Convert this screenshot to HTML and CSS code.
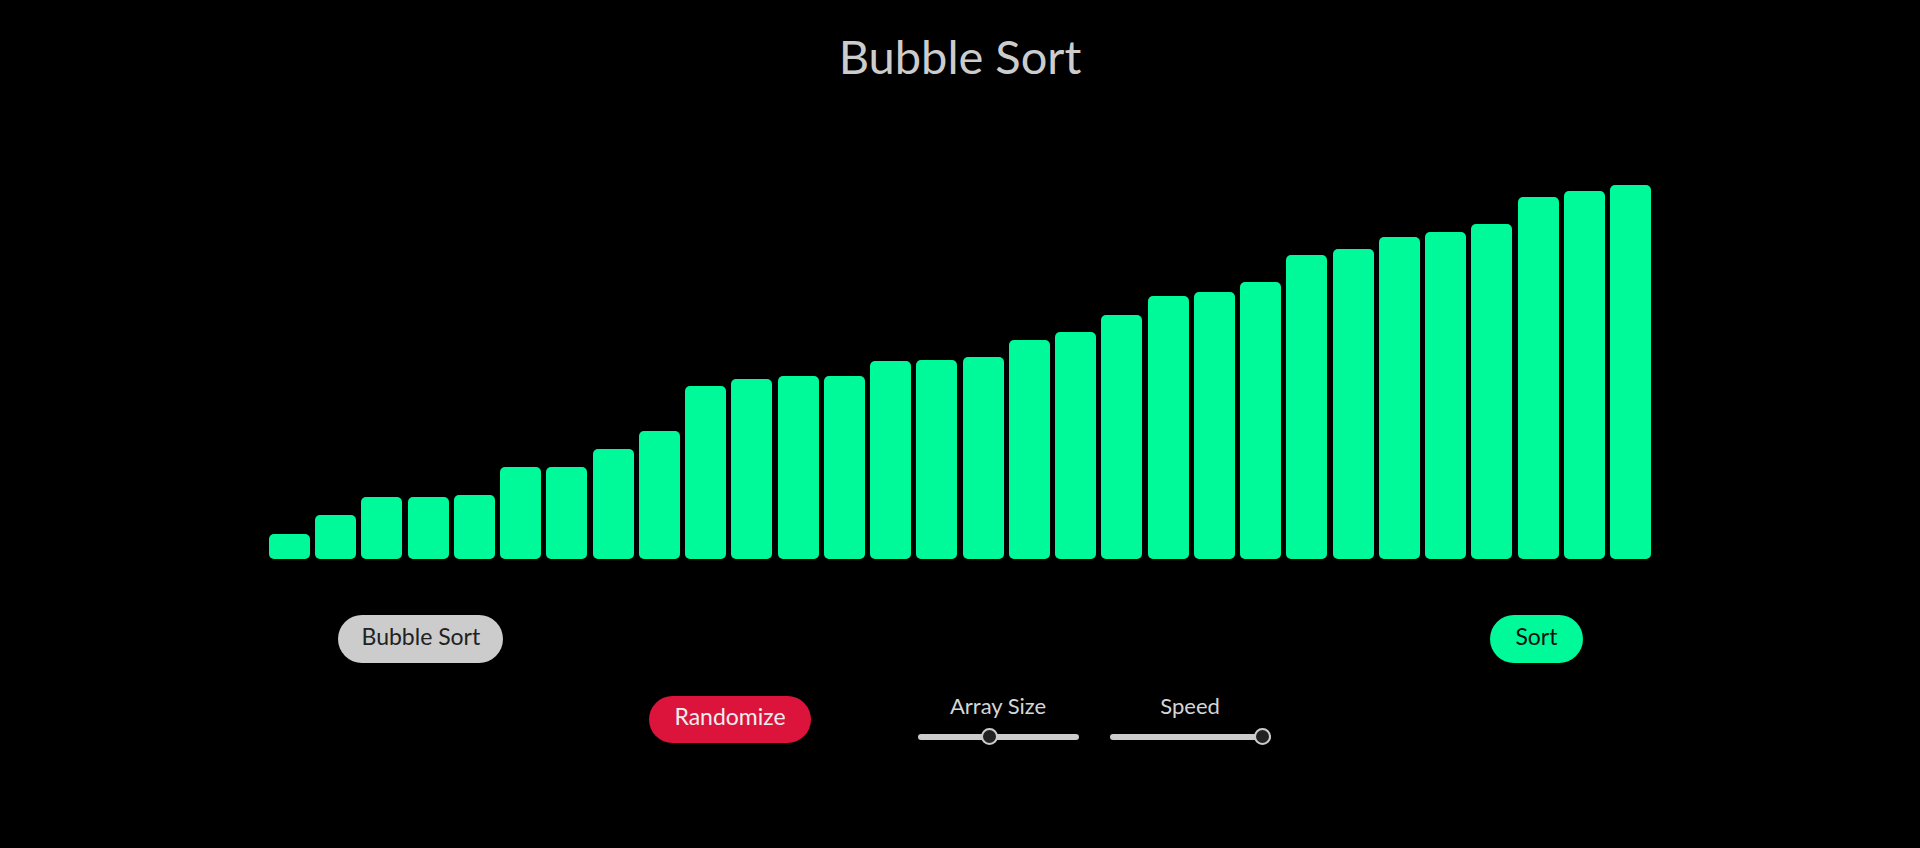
FILE: index.html
```html
<!DOCTYPE html>
<html lang="en">
<head>
<meta charset="utf-8">
<title>Bubble Sort</title>
<link rel="stylesheet" href="styles.css">
</head>
<body>
<main class="app">
  <h1 class="title">Bubble Sort</h1>
  <div class="bars">
    <div class="bar" style="height:25px"></div>
    <div class="bar" style="height:44px"></div>
    <div class="bar" style="height:62px"></div>
    <div class="bar" style="height:62px"></div>
    <div class="bar" style="height:64px"></div>
    <div class="bar" style="height:92px"></div>
    <div class="bar" style="height:92px"></div>
    <div class="bar" style="height:110px"></div>
    <div class="bar" style="height:128px"></div>
    <div class="bar" style="height:173px"></div>
    <div class="bar" style="height:180px"></div>
    <div class="bar" style="height:183px"></div>
    <div class="bar" style="height:183px"></div>
    <div class="bar" style="height:198px"></div>
    <div class="bar" style="height:199px"></div>
    <div class="bar" style="height:202px"></div>
    <div class="bar" style="height:219px"></div>
    <div class="bar" style="height:227px"></div>
    <div class="bar" style="height:244px"></div>
    <div class="bar" style="height:263px"></div>
    <div class="bar" style="height:267px"></div>
    <div class="bar" style="height:277px"></div>
    <div class="bar" style="height:304px"></div>
    <div class="bar" style="height:310px"></div>
    <div class="bar" style="height:322px"></div>
    <div class="bar" style="height:327px"></div>
    <div class="bar" style="height:335px"></div>
    <div class="bar" style="height:362px"></div>
    <div class="bar" style="height:368px"></div>
    <div class="bar" style="height:374px"></div>
  </div>
  <div class="actions">
    <button class="btn btn-algo" type="button">Bubble Sort</button>
    <button class="btn btn-sort" type="button">Sort</button>
  </div>
  <div class="controls">
    <button class="btn btn-random" type="button">Randomize</button>
    <div class="sliders">
      <label class="slider">
        <span class="slider-label">Array Size</span>
        <input class="range" type="range" min="0" max="100" value="44">
      </label>
      <label class="slider">
        <span class="slider-label">Speed</span>
        <input class="range" type="range" min="0" max="100" value="100">
      </label>
    </div>
  </div>
</main>
</body>
</html>
```

FILE: styles.css
```css
* {
  box-sizing: border-box;
}

html, body {
  margin: 0;
  padding: 0;
  background: #000;
}

body {
  font-family: "Lato", "Open Sans", sans-serif;
  color: #cfcfcf;
}

.app {
  display: flex;
  flex-direction: column;
  align-items: center;
  padding-top: 26px;
}

.title {
  margin: 0;
  font-size: 47px;
  font-weight: 400;
  line-height: 60px;
  color: #cccccc;
}

.bars {
  width: 72%;
  height: 400px;
  margin-top: 73px;
  display: flex;
  align-items: flex-end;
  justify-content: space-between;
}

.bar {
  width: 41px;
  background: #00fa9a;
  border-radius: 5px;
}

.actions {
  width: 1245px;
  margin-top: 56px;
  display: flex;
  justify-content: space-between;
}

.btn {
  font-family: inherit;
  font-size: 23px;
  line-height: 24px;
  padding: 9px 25px 15px;
  border: none;
  border-radius: 24px;
  cursor: pointer;
}

.btn-algo {
  background: #cccccc;
  color: #222;
  padding-left: 24px;
  padding-right: 23px;
}

.btn-sort {
  background: #00fa9a;
  color: #111;
}

.btn-random {
  background: #dc143c;
  color: #eee;
  padding-top: 8px;
  padding-bottom: 15px;
}

.controls {
  margin-top: 33px;
  display: flex;
  align-items: flex-start;
  gap: 107px;
}

.sliders {
  display: flex;
  gap: 31px;
}

.slider {
  display: flex;
  flex-direction: column;
  align-items: center;
}

.slider-label {
  font-size: 22px;
  line-height: 20px;
  color: #d6d6d6;
}

.range {
  -webkit-appearance: none;
  appearance: none;
  width: 161px;
  height: 17px;
  margin: 12px 0 0;
  background: transparent;
}

.range::-webkit-slider-runnable-track {
  height: 6px;
  border-radius: 3px;
  background: #cccccc;
}

.range::-webkit-slider-thumb {
  -webkit-appearance: none;
  appearance: none;
  width: 17px;
  height: 17px;
  margin-top: -5.5px;
  border-radius: 50%;
  background: #222;
  border: 2px solid #cccccc;
}

.range::-moz-range-track {
  height: 6px;
  border-radius: 3px;
  background: #cccccc;
}

.range::-moz-range-thumb {
  width: 13px;
  height: 13px;
  border-radius: 50%;
  background: #222;
  border: 2px solid #cccccc;
}
```
